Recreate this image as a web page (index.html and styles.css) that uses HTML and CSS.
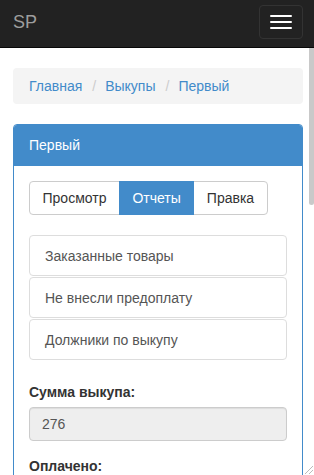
FILE: index.html
```html
<!DOCTYPE html>
<html lang="ru">
<head>
<meta charset="utf-8">
<title>SP</title>
<link rel="stylesheet" href="styles.css">
</head>
<body>
<header class="navbar">
  <a class="brand" href="#">SP</a>
  <button class="toggle" type="button" aria-label="Меню">
    <span class="bar"></span><span class="bar"></span><span class="bar"></span>
  </button>
</header>
<main class="scroller">
  <div class="container">
    <ol class="breadcrumb">
      <li><a href="#">Главная</a></li>
      <li><a href="#">Выкупы</a></li>
      <li><a href="#">Первый</a></li>
    </ol>
    <section class="panel">
      <div class="panel-heading">Первый</div>
      <div class="panel-body">
        <div class="btn-group">
          <a class="btn" href="#">Просмотр</a>
          <a class="btn active" href="#">Отчеты</a>
          <a class="btn" href="#">Правка</a>
        </div>
        <div class="list">
          <a class="list-item" href="#">Заказанные товары</a>
          <a class="list-item" href="#">Не внесли предоплату</a>
          <a class="list-item" href="#">Должники по выкупу</a>
        </div>
        <div class="form-group">
          <label class="label">Сумма выкупа:</label>
          <div class="input">276</div>
        </div>
        <div class="form-group">
          <label class="label">Оплачено:</label>
          <div class="input">0</div>
        </div>
      </div>
    </section>
  </div>
  <div class="scroll-thumb" aria-hidden="true"></div>
  <div class="resizer" aria-hidden="true"></div>
</main>
</body>
</html>
```
FILE: styles.css
```css
* { box-sizing: border-box; }
html, body { height: 100%; }
body {
  margin: 0;
  font-family: "Liberation Sans", Arial, sans-serif;
  font-size: 14px;
  line-height: 20px;
  color: #333;
  background: #fff;
  display: flex;
  flex-direction: column;
  overflow: hidden;
}
a { text-decoration: none; }

.navbar {
  flex: none;
  height: 48px;
  background: #222;
  border-bottom: 1px solid #080808;
  display: flex;
  align-items: flex-start;
  justify-content: space-between;
}
.brand {
  padding: 12px 13px 0;
  font-size: 18px;
  line-height: 20px;
  color: #9d9d9d;
}
.toggle {
  margin: 5px 11px 0 0;
  width: 44px;
  height: 34px;
  padding: 0 10px;
  background: transparent;
  border: 1px solid #333;
  border-radius: 4px;
  display: flex;
  flex-direction: column;
  justify-content: center;
  gap: 4px;
}
.bar {
  display: block;
  width: 22px;
  height: 2px;
  background: #fff;
  border-radius: 1px;
}

.scroller {
  flex: 1;
  overflow: hidden;
  position: relative;
}
.scroll-thumb {
  position: absolute;
  top: 0;
  right: 0;
  width: 5px;
  height: 157px;
  background: #c9c9c9;
  border-radius: 0 0 3px 3px;
}
.resizer {
  position: absolute;
  right: 1px;
  bottom: 1px;
  width: 8px;
  height: 8px;
  background: linear-gradient(135deg, transparent 45%, #bbb 45%, #bbb 55%, transparent 55%, transparent 70%, #bbb 70%, #bbb 80%, transparent 80%);
}

.container {
  padding: 20px 11px 20px 13px;
}

.breadcrumb {
  margin: 0 0 20px;
  padding: 8px 16px;
  list-style: none;
  background: #f4f4f4;
  border-radius: 4px;
  display: flex;
}
.breadcrumb li + li::before {
  content: "/";
  color: #ccc;
  padding: 0 9px 0 10px;
}
.breadcrumb a { color: #428bca; }

.panel {
  border: 1px solid #428bca;
  border-radius: 4px;
}
.panel-heading {
  padding: 10px 15px;
  background: #428bca;
  color: #fff;
  border-bottom: 1px solid #428bca;
  border-radius: 3px 3px 0 0;
}
.panel-body {
  padding: 15px 15px 0;
}

.btn-group {
  display: flex;
  margin-bottom: 20px;
}
.btn {
  display: block;
  padding: 6px 12.5px;
  border: 1px solid #ccc;
  color: #333;
  background: #fff;
  line-height: 20px;
}
.btn + .btn { margin-left: -1px; }
.btn:first-child { border-radius: 4px 0 0 4px; }
.btn:last-child { border-radius: 0 4px 4px 0; }
.btn.active {
  background: #428bca;
  border-color: #428bca;
  color: #fff;
  position: relative;
}

.list {
  display: flex;
  flex-direction: column;
  gap: 1px;
  margin-bottom: 22px;
}
.list-item {
  display: block;
  height: 41px;
  padding: 10px 15px 9px;
  border: 1px solid #ddd;
  border-radius: 4px;
  color: #555;
}

.form-group { margin-bottom: 15px; }
.label {
  display: block;
  font-weight: bold;
  margin-bottom: 5px;
}
.input {
  height: 34px;
  padding: 6px 12px;
  background: #eee;
  border: 1px solid #ccc;
  border-radius: 4px;
  color: #555;
  box-shadow: inset 0 1px 1px rgba(0,0,0,.075);
}
```
